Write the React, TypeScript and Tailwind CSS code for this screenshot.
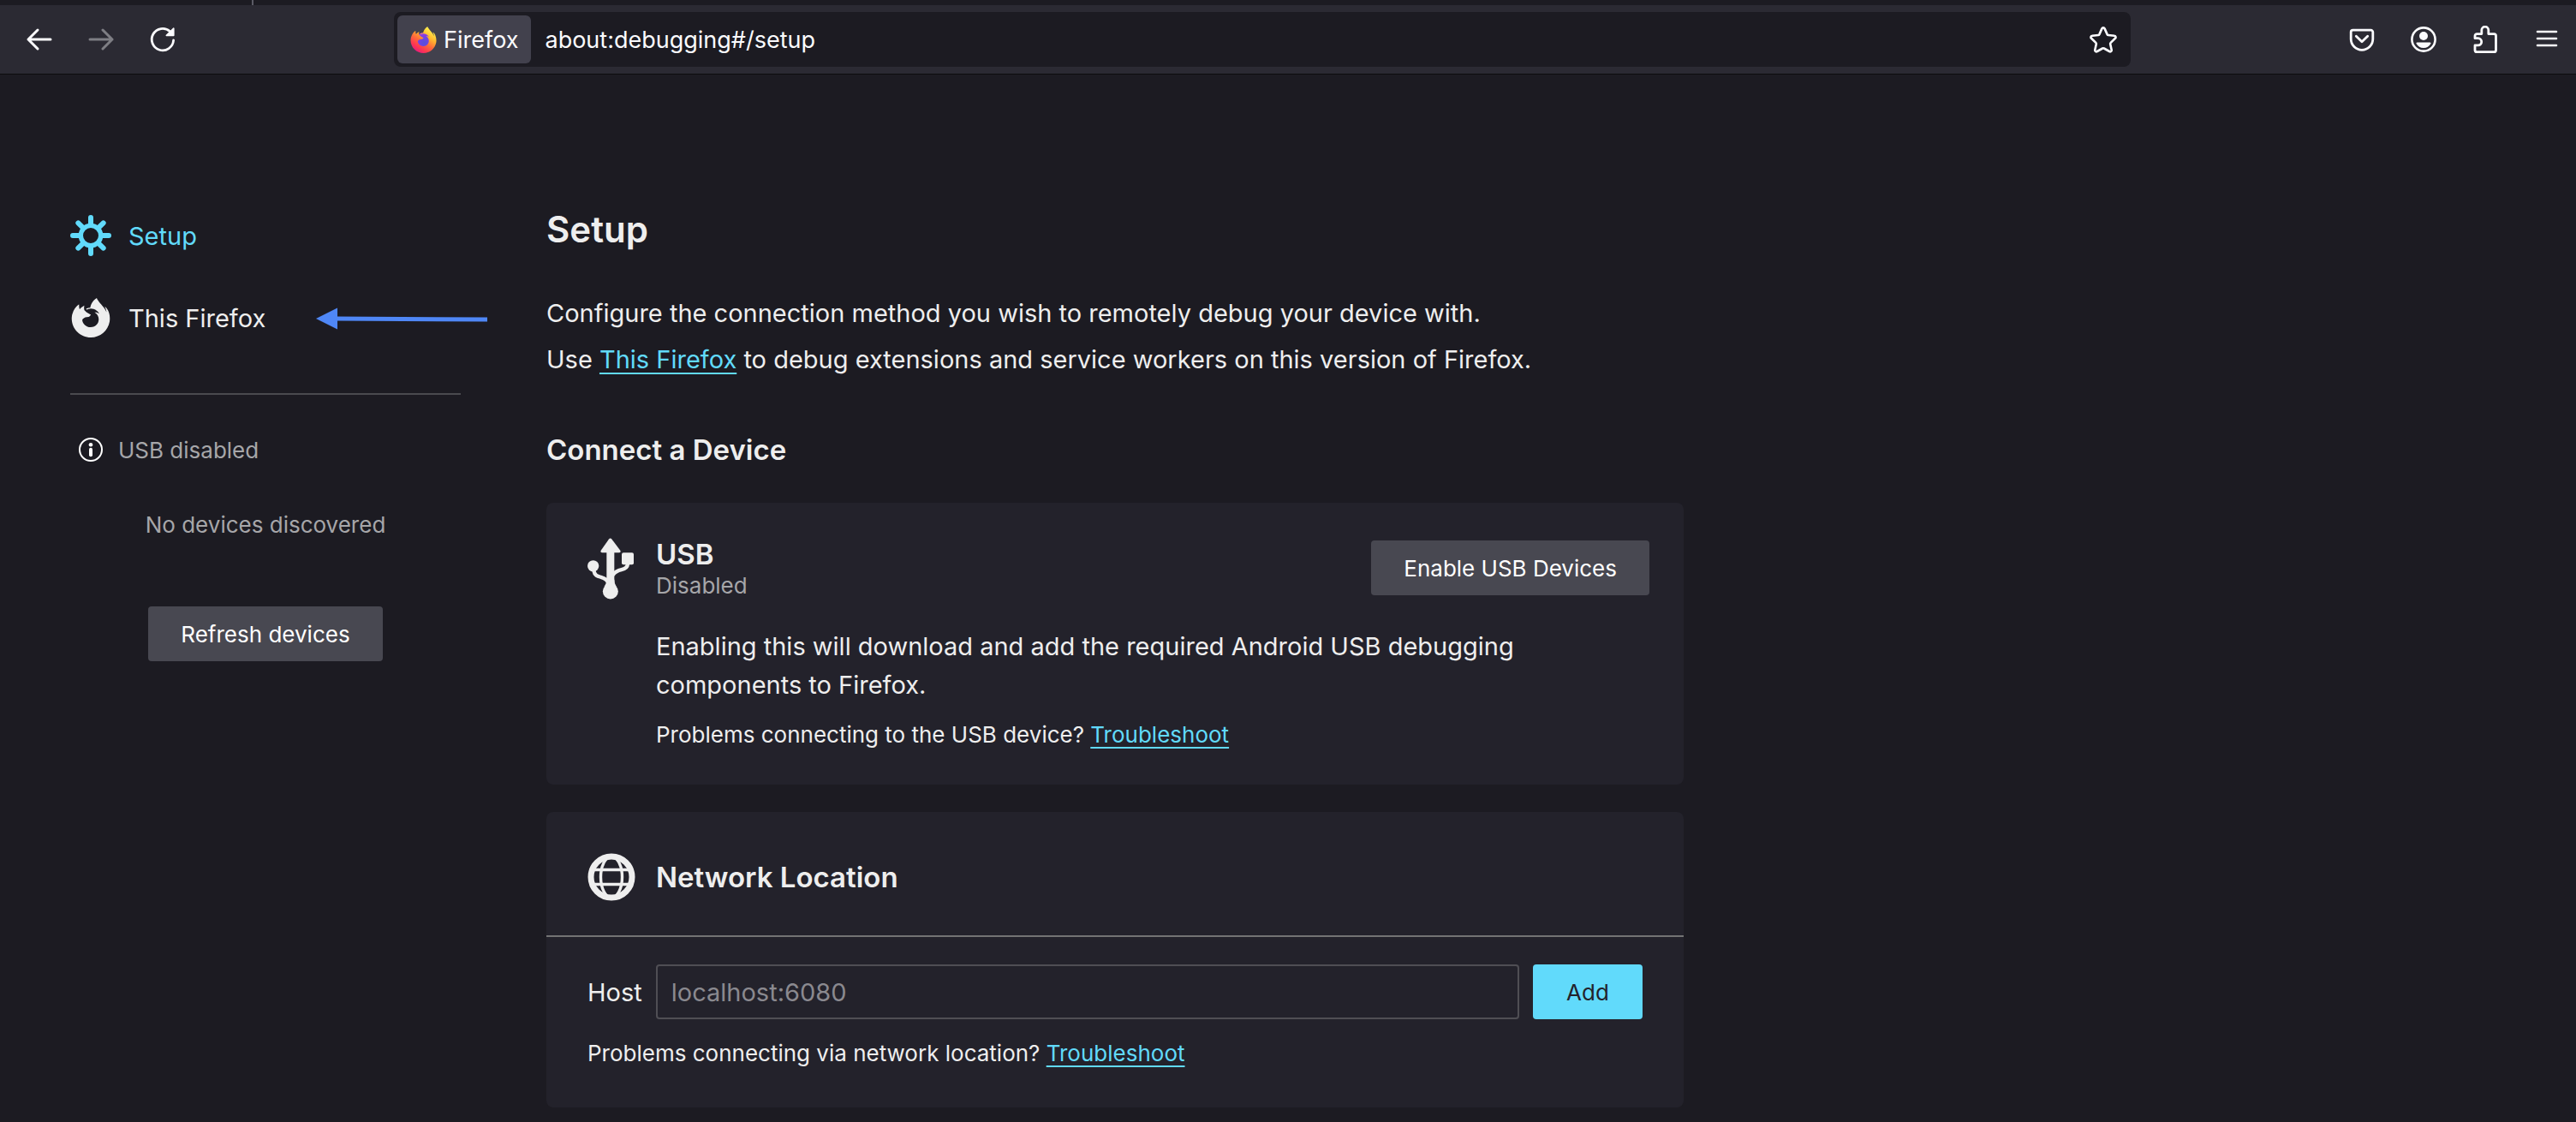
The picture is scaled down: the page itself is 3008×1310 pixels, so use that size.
import React from 'react';
import { SiFirefoxbrowser } from 'react-icons/si';

type IconProps = { className?: string };

const stroke = {
  fill: 'none',
  stroke: 'currentColor',
  strokeLinecap: 'round',
  strokeLinejoin: 'round',
} as const;

function BackIcon({ className }: IconProps) {
  return (
    <svg viewBox="0 0 32 32" className={className} {...stroke} strokeWidth={3} aria-hidden="true">
      <path d="M3 16H29M14 5L3 16L14 27" />
    </svg>
  );
}

function ReloadIcon({ className }: IconProps) {
  return (
    <svg viewBox="0 0 32 32" className={className} aria-hidden="true">
      <path d="M28.6 17A12.7 12.7 0 1 1 24.5 6.7" {...stroke} strokeWidth={2.8} />
      <path d="M29.6 3.2V11.2a1 1 0 0 1-1 1H20.4a.8.8 0 0 1-.6-1.4L28.2 2.6a.8.8 0 0 1 1.4.6z" fill="currentColor" />
    </svg>
  );
}

function StarIcon({ className }: IconProps) {
  return (
    <svg viewBox="0 0 32 32" className={className} {...stroke} strokeWidth={2.6} aria-hidden="true">
      <path d="M14.4 3.4a1.8 1.8 0 0 1 3.2 0L20.6 10.1a1.6 1.6 0 0 0 1.3.9L28.9 11.8a1.7 1.7 0 0 1 1 3L24.7 19.9a1.6 1.6 0 0 0-.5 1.5L25.7 28.2a1.7 1.7 0 0 1-2.6 1.8L16.9 26.5a1.8 1.8 0 0 0-1.8 0L8.9 30a1.7 1.7 0 0 1-2.6-1.8L7.8 21.4a1.6 1.6 0 0 0-.5-1.5L2.1 14.8a1.7 1.7 0 0 1 1-3L10.1 11a1.6 1.6 0 0 0 1.3-.9z" />
    </svg>
  );
}

function PocketIcon({ className }: IconProps) {
  return (
    <svg viewBox="0 0 32 32" className={className} {...stroke} strokeWidth={2.8} aria-hidden="true">
      <path d="M5.5 5.2H26.5a2.3 2.3 0 0 1 2.3 2.3V15.5a12.8 12.8 0 0 1-25.6 0V7.5a2.3 2.3 0 0 1 2.3-2.3z" />
      <path d="M9.3 12.2L16 18.8L22.7 12.2" />
    </svg>
  );
}

function AccountIcon({ className }: IconProps) {
  return (
    <svg viewBox="0 0 32 32" className={className} aria-hidden="true">
      <circle cx="16" cy="16" r="13.6" {...stroke} strokeWidth={2.6} />
      <circle cx="16" cy="12" r="5" fill="currentColor" />
      <path d="M8.6 19.4H23.4c1 0 1.5.9 1 1.7A9.6 9.6 0 0 1 7.6 21.1c-.5-.8 0-1.7 1-1.7z" fill="currentColor" />
    </svg>
  );
}

function PuzzleIcon({ className }: IconProps) {
  return (
    <svg viewBox="0 0 32 32" className={className} {...stroke} strokeWidth={2.8} aria-hidden="true">
      <path d="M4 12V11.8A2.200 2.200 0 0 1 6.200 9.600H11.800V5.200a4 4 0 0 1 8 0V9.600H26.300a2.200 2.200 0 0 1 2.200 2.200V28.400a2.200 2.200 0 0 1-2.200 2.200H6.200A2.200 2.200 0 0 1 4 28.400V22.900H7.600a4.100 4.100 0 0 0 0-8.200H4Z" />
    </svg>
  );
}

function MenuIcon({ className }: IconProps) {
  return (
    <svg viewBox="0 0 32 32" className={className} {...stroke} strokeWidth={2.6} aria-hidden="true">
      <path d="M5 7H27M5 15H27M5 23H27" />
    </svg>
  );
}

function FirefoxColorIcon({ className }: IconProps) {
  return (
    <span className={'relative block ' + (className ?? '')}>
      <svg viewBox="0 0 24 24" className="absolute inset-0 size-full" aria-hidden="true">
        <defs>
          <linearGradient id="fox-flame" x1="0.85" y1="0.05" x2="0.25" y2="1">
            <stop offset="0.05" stopColor="#fff44f" />
            <stop offset="0.35" stopColor="#ffb52e" />
            <stop offset="0.58" stopColor="#ff6b3a" />
            <stop offset="0.8" stopColor="#ff3750" />
            <stop offset="1" stopColor="#e31587" />
          </linearGradient>
          <radialGradient id="fox-globe" cx="0.55" cy="0.7" r="0.7">
            <stop offset="0" stopColor="#5a4fd8" />
            <stop offset="0.6" stopColor="#7542e5" />
            <stop offset="1" stopColor="#a238e0" />
          </radialGradient>
        </defs>
        <circle cx="12" cy="12" r="6.5" fill="url(#fox-globe)" />
      </svg>
      <SiFirefoxbrowser className="absolute inset-0 size-full" fill="url(#fox-flame)" aria-hidden="true" />
    </span>
  );
}

function GearIcon({ className }: IconProps) {
  return (
    <svg viewBox="-72 -72 144 144" className={className} {...stroke} aria-hidden="true">
      <circle r="35" strokeWidth={16} />
      <path
        strokeWidth={18}
        d="M0-43V-63M0 43V63M-43 0H-63M43 0H63M-31-31L-44-44M31-31L44-44M-31 31L-44 44M31 31L44 44"
      />
    </svg>
  );
}

function InfoIcon({ className }: IconProps) {
  return (
    <svg viewBox="0 0 28 28" className={className} aria-hidden="true">
      <circle cx="14" cy="14" r="13" {...stroke} strokeWidth={2} />
      <circle cx="14" cy="8.3" r="2.3" fill="currentColor" />
      <path d="M14 13.8V20.2" {...stroke} strokeWidth={4} />
    </svg>
  );
}

function UsbIcon({ className }: IconProps) {
  return (
    <svg viewBox="51 55 162 213" className={className} aria-hidden="true">
      <g fill="currentColor">
        <path d="M126 58Q131 52 136 58L166 98Q169 105 161 105H102Q95 105 98 98Z" />
        <rect x="118" y="100" width="27" height="125" />
        <path d="M118 200Q118 214 110 224H152Q145 214 145 200Z" />
        <circle cx="131.5" cy="241" r="27" />
        <circle cx="71" cy="152" r="20" />
        <rect x="171" y="105" width="42" height="42" rx="6" />
      </g>
      <path d="M73 168C76 186 86 188 98 191Q120 197 124 212" {...stroke} strokeWidth={13} />
      <path d="M192 145C191 158 183 162 170 165Q150 170 141 182" {...stroke} strokeWidth={13} />
    </svg>
  );
}

function GlobeIcon({ className }: IconProps) {
  return (
    <svg viewBox="0 0 56 56" className={className} {...stroke} aria-hidden="true">
      <circle cx="28" cy="28" r="24" strokeWidth={7} />
      <ellipse cx="28" cy="28" rx="12.5" ry="24" strokeWidth={3.4} />
      <path d="M7 19.5H49M7 36.5H49" strokeWidth={3.4} />
    </svg>
  );
}

function ToolbarButton({ label, disabled, children }: { label: string; disabled?: boolean; children: React.ReactNode }) {
  return (
    <button
      type="button"
      aria-label={label}
      disabled={disabled}
      className="flex h-16 w-[72px] shrink-0 items-center justify-center rounded-lg text-[#fbfbfe] disabled:opacity-40"
    >
      {children}
    </button>
  );
}

function TextLink({ children }: { children: React.ReactNode }) {
  return (
    <a
      href="#"
      className="text-[#61dafb] underline decoration-2 underline-offset-[5px] [text-decoration-skip-ink:none]"
    >
      {children}
    </a>
  );
}

function BrowserChrome() {
  return (
    <header className="overflow-hidden border-b border-[#0c0c0d] bg-[#2b2a33] text-[#fbfbfe]">
      <div className="flex h-1.5 bg-[#1c1b22] pl-[294px]">
        <div className="w-0.5 bg-[#5b5b66]" />
      </div>
      <div className="flex h-20 items-center pl-2.5">
        <ToolbarButton label="Back"><BackIcon className="size-8" /></ToolbarButton>
        <ToolbarButton label="Forward" disabled><BackIcon className="size-8 rotate-180" /></ToolbarButton>
        <ToolbarButton label="Reload"><ReloadIcon className="size-8" /></ToolbarButton>
        <div className="mx-[234px] flex h-16 flex-1 items-center rounded-lg bg-[#1c1b22] p-1">
          <button type="button" className="flex h-14 items-center gap-2 rounded-md bg-[#42414d] px-[15px] text-[27px]">
            <FirefoxColorIcon className="size-[31px]" />
            <span className="pt-0.5">Firefox</span>
          </button>
          <input
            type="text"
            aria-label="Address"
            defaultValue="about:debugging#/setup"
            className="min-w-0 flex-1 bg-transparent px-4 pt-0.5 text-[27px] outline-none"
          />
          <button type="button" aria-label="Bookmark this page" className="flex size-14 items-center justify-center">
            <StarIcon className="size-8" />
          </button>
        </div>
        <div className="-mr-0.5 flex">
          <ToolbarButton label="Save to Pocket"><PocketIcon className="size-8" /></ToolbarButton>
          <ToolbarButton label="Account"><AccountIcon className="size-8" /></ToolbarButton>
          <ToolbarButton label="Extensions"><PuzzleIcon className="size-8" /></ToolbarButton>
          <ToolbarButton label="Open application menu"><MenuIcon className="size-8" /></ToolbarButton>
        </div>
      </div>
    </header>
  );
}

function Sidebar() {
  return (
    <aside className="w-[456px] shrink-0 pt-[140px]">
      <ul className="text-[29px]">
        <li>
          <a href="#/setup" aria-current="page" className="flex h-24 items-center gap-5 text-[#61dafb]">
            <GearIcon className="size-12" />
            <span className="pt-0.5">Setup</span>
          </a>
        </li>
        <li className="relative">
          <a href="#/runtime/this-firefox" className="flex h-24 items-center gap-5">
            <SiFirefoxbrowser className="mx-px size-[46px]" aria-hidden="true" />
            <span className="pt-0.5">This Firefox</span>
          </a>
          <svg viewBox="0 0 200 26" className="absolute top-9 left-[287px] h-[26px] w-[200px] text-[#4f87f6]" aria-hidden="true">
            <path d="M0 13L25 .5V25.5Z" fill="currentColor" />
            <path d="M22 13L200 14" stroke="currentColor" strokeWidth={5} />
          </svg>
        </li>
      </ul>
      <hr className="mt-10 border-t-2 border-[#4a4a4f]" />
      <div className="mt-8 flex h-16 items-center gap-[18px] pl-2.5 text-[26px] text-[#a6a6a9]">
        <InfoIcon className="size-7 text-white" />
        USB disabled
      </div>
      <p className="mt-[38px] text-center text-[26px] leading-9 text-[#a6a6a9]">No devices discovered</p>
      <div className="mt-[77px] flex justify-center">
        <button type="button" className="h-16 rounded bg-[#484851] px-[38px] text-[26px] text-white">
          Refresh devices
        </button>
      </div>
    </aside>
  );
}

function UsbCard() {
  return (
    <section className="mt-[42px] flex gap-[26px] rounded-lg bg-[#23222b] pt-10 pr-10 pb-10 pl-12">
      <UsbIcon className="mt-px h-[72px] w-[54px] shrink-0" />
      <div className="flex-1">
        <div className="flex items-start justify-between">
          <div>
            <h3 className="text-[33px] leading-10 font-semibold">USB</h3>
            <p className="text-[26px] leading-[34px] text-[#a6a6a9]">Disabled</p>
          </div>
          <button type="button" className="mt-1 h-16 rounded bg-[#484851] px-[38px] text-[26px] text-white">
            Enable USB Devices
          </button>
        </div>
        <p className="mt-[31px] pr-6 text-[29px] leading-[45px]">
          Enabling this will download and add the required Android USB debugging components to Firefox.
        </p>
        <p className="mt-[18px] text-[26px] leading-9">
          Problems connecting to the USB device? <TextLink>Troubleshoot</TextLink>
        </p>
      </div>
    </section>
  );
}

function NetworkCard() {
  return (
    <section className="mt-8 rounded-lg bg-[#23222b]">
      <div className="flex items-center gap-6 border-b-2 border-[#737373] px-12 pt-12 pb-10">
        <GlobeIcon className="size-14" />
        <h3 className="text-[33px] leading-10 font-semibold">Network Location</h3>
      </div>
      <div className="px-12 pt-8 pb-[45px]">
        <form className="flex items-center gap-4 text-[29px]" onSubmit={(e) => e.preventDefault()}>
          <label htmlFor="host" className="pt-0.5">Host</label>
          <input
            id="host"
            type="text"
            placeholder="localhost:6080"
            className="h-16 min-w-0 flex-1 rounded border-2 border-[#4f4e54] bg-transparent px-4 outline-none placeholder:text-[#8a898f]"
          />
          <button type="submit" className="h-16 w-32 rounded bg-[#61dafb] text-[26px] text-[#23222b]">
            Add
          </button>
        </form>
        <p className="mt-[22px] text-[26px] leading-9">
          Problems connecting via network location? <TextLink>Troubleshoot</TextLink>
        </p>
      </div>
    </section>
  );
}

export default function App() {
  return (
    <div className="min-h-screen bg-[#1c1b22] font-['Inter',sans-serif] text-[#eeeeee]">
      <BrowserChrome />
      <div className="flex gap-[100px] px-[82px] pb-4">
        <Sidebar />
        <main className="max-w-[1328px] flex-1 pt-[155px]">
          <h1 className="text-[42px] leading-[52px] font-semibold">Setup</h1>
          <p className="mt-[45px] text-[29px] leading-[54px]">
            Configure the connection method you wish to remotely debug your device with.
            <br />
            Use <TextLink>This Firefox</TextLink> to debug extensions and service workers on this version of Firefox.
          </p>
          <h2 className="mt-[58px] text-[33px] leading-10 font-semibold">Connect a Device</h2>
          <UsbCard />
          <NetworkCard />
        </main>
      </div>
    </div>
  );
}
